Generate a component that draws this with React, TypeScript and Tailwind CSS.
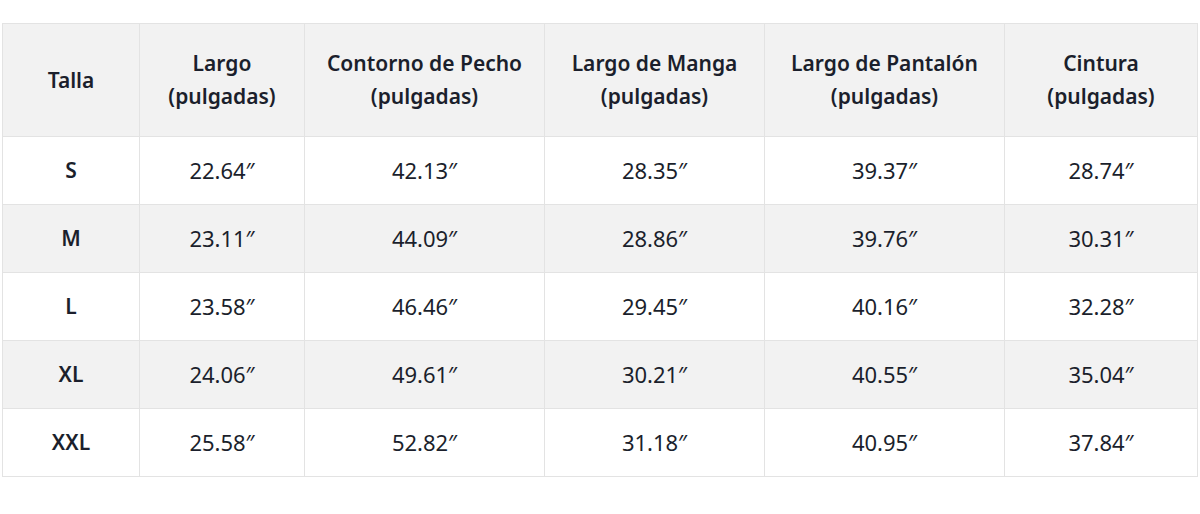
import React from "react";

const headers: [string, string | null][] = [
  ["Talla", null],
  ["Largo", "(pulgadas)"],
  ["Contorno de Pecho", "(pulgadas)"],
  ["Largo de Manga", "(pulgadas)"],
  ["Largo de Pantalón", "(pulgadas)"],
  ["Cintura", "(pulgadas)"],
];

const rows: string[][] = [
  ["S", "22.64″", "42.13″", "28.35″", "39.37″", "28.74″"],
  ["M", "23.11″", "44.09″", "28.86″", "39.76″", "30.31″"],
  ["L", "23.58″", "46.46″", "29.45″", "40.16″", "32.28″"],
  ["XL", "24.06″", "49.61″", "30.21″", "40.55″", "35.04″"],
  ["XXL", "25.58″", "52.82″", "31.18″", "40.95″", "37.84″"],
];

const widths = ["w-[137px]", "w-[165px]", "w-[240px]", "w-[220px]", "w-[240px]", "w-[193px]"];

export default function App() {
  return (
    <div className="w-[1200px] h-[514px] bg-white pt-[23px] pl-[2px]" style={{ fontFamily: "'Noto Sans', Lato, sans-serif" }}>
      <table className="table-fixed border-collapse w-[1196px] text-[#1b1f2c]">
        <colgroup>
          {widths.map((w, i) => (
            <col key={i} className={w} />
          ))}
        </colgroup>
        <thead>
          <tr className="h-[113px] bg-[#f2f2f2]">
            {headers.map(([a, b], i) => (
              <th key={i} className="border border-[#e3e3e3] text-center font-semibold text-[21px] leading-[33px] p-0">
                <div>{a}</div>
                {b && <div>{b}</div>}
              </th>
            ))}
          </tr>
        </thead>
        <tbody>
          {rows.map((r, ri) => (
            <tr key={ri} className={"h-[68px] " + (ri % 2 === 1 ? "bg-[#f2f2f2]" : "bg-white")}>
              {r.map((c, ci) => (
                <td
                  key={ci}
                  className={
                    "border border-[#e3e3e3] text-center p-0 " +
                    (ci === 0 ? "font-semibold text-[21px]" : "font-normal text-[22px]")
                  }
                >
                  {c}
                </td>
              ))}
            </tr>
          ))}
        </tbody>
      </table>
    </div>
  );
}
